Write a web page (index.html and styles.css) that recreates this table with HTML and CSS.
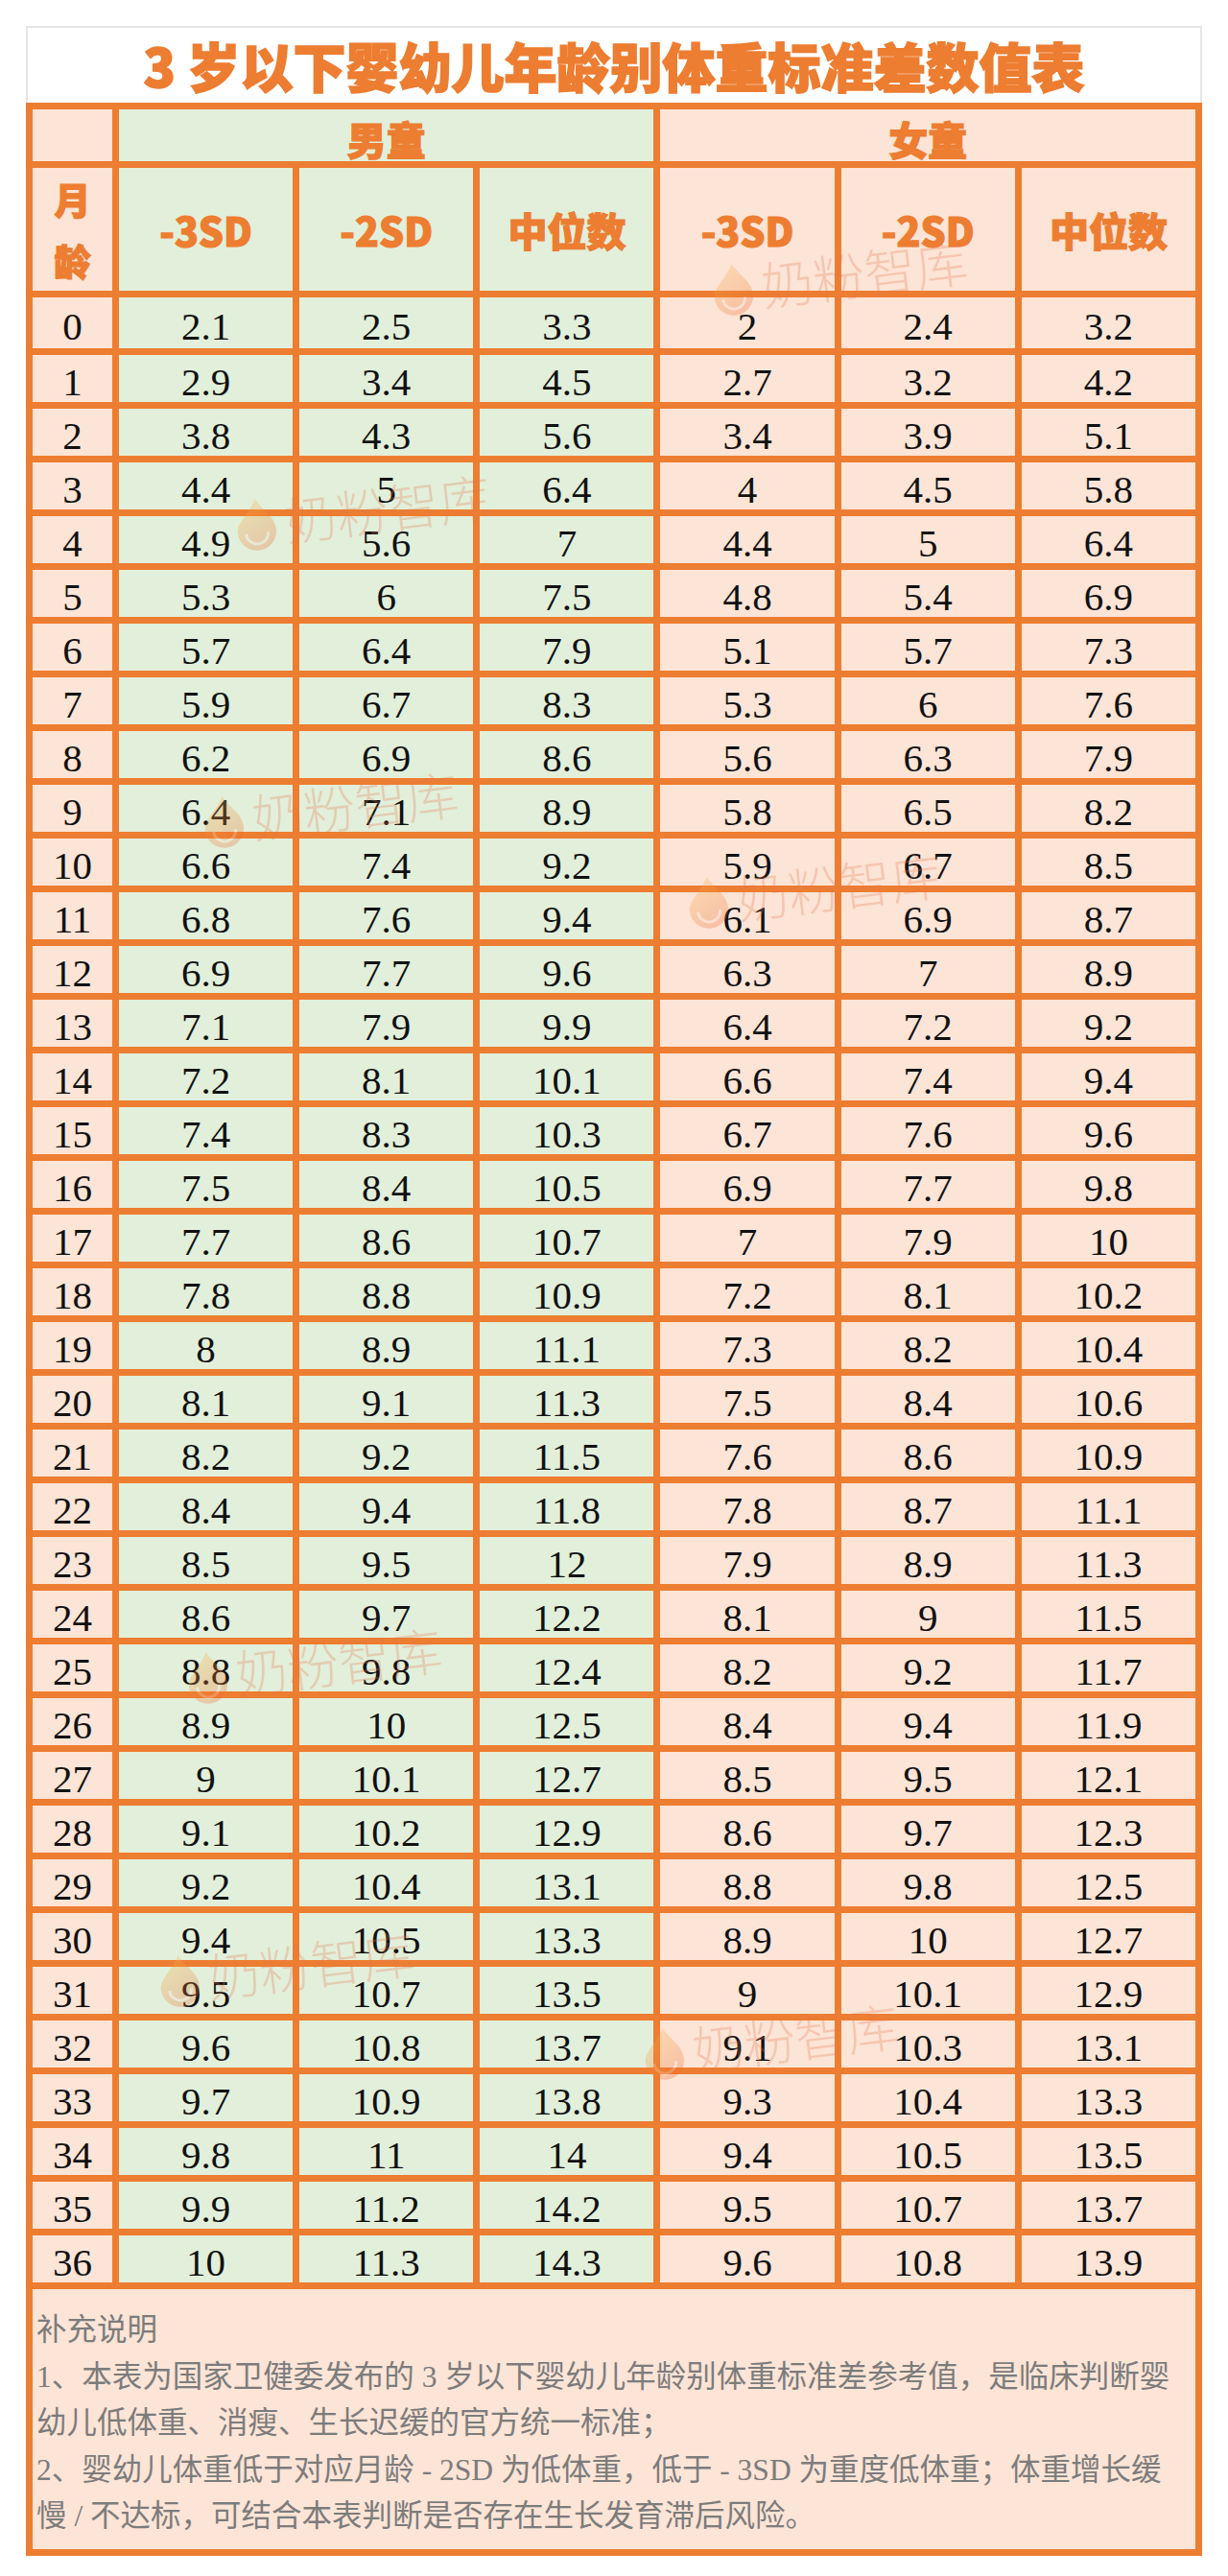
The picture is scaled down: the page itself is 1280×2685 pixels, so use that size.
FILE: index.html
```html
<!DOCTYPE html>
<html lang="zh-CN">
<head>
<meta charset="utf-8">
<title>3 岁以下婴幼儿年龄别体重标准差数值表</title>
<link rel="stylesheet" href="styles.css">
</head>
<body>
<svg class="defs" width="0" height="0" aria-hidden="true">
  <defs>
    <linearGradient id="wmgrad" x1="0" y1="0" x2="0.4" y2="1">
      <stop offset="0" stop-color="#FAC64E"/>
      <stop offset="1" stop-color="#EE6A2C"/>
    </linearGradient>
  </defs>
</svg>
<div class="page">
  <div class="title">3 岁以下婴幼儿年龄别体重标准差数值表</div>
  <table class="chart">
    <colgroup>
      <col class="c-mo">
      <col><col><col><col><col><col>
    </colgroup>
    <thead>
      <tr class="h1">
        <th class="m"></th>
        <th class="b" colspan="3">男童</th>
        <th class="g" colspan="3">女童</th>
      </tr>
      <tr class="h2">
        <th class="m mo">月<br>龄</th>
        <th class="b">-3SD</th>
        <th class="b">-2SD</th>
        <th class="b">中位数</th>
        <th class="g">-3SD</th>
        <th class="g">-2SD</th>
        <th class="g">中位数</th>
      </tr>
    </thead>
    <tbody>
      <tr class="first"><td class="m">0</td><td class="b">2.1</td><td class="b">2.5</td><td class="b">3.3</td><td class="g">2</td><td class="g">2.4</td><td class="g">3.2</td></tr>
      <tr><td class="m">1</td><td class="b">2.9</td><td class="b">3.4</td><td class="b">4.5</td><td class="g">2.7</td><td class="g">3.2</td><td class="g">4.2</td></tr>
      <tr><td class="m">2</td><td class="b">3.8</td><td class="b">4.3</td><td class="b">5.6</td><td class="g">3.4</td><td class="g">3.9</td><td class="g">5.1</td></tr>
      <tr><td class="m">3</td><td class="b">4.4</td><td class="b">5</td><td class="b">6.4</td><td class="g">4</td><td class="g">4.5</td><td class="g">5.8</td></tr>
      <tr><td class="m">4</td><td class="b">4.9</td><td class="b">5.6</td><td class="b">7</td><td class="g">4.4</td><td class="g">5</td><td class="g">6.4</td></tr>
      <tr><td class="m">5</td><td class="b">5.3</td><td class="b">6</td><td class="b">7.5</td><td class="g">4.8</td><td class="g">5.4</td><td class="g">6.9</td></tr>
      <tr><td class="m">6</td><td class="b">5.7</td><td class="b">6.4</td><td class="b">7.9</td><td class="g">5.1</td><td class="g">5.7</td><td class="g">7.3</td></tr>
      <tr><td class="m">7</td><td class="b">5.9</td><td class="b">6.7</td><td class="b">8.3</td><td class="g">5.3</td><td class="g">6</td><td class="g">7.6</td></tr>
      <tr><td class="m">8</td><td class="b">6.2</td><td class="b">6.9</td><td class="b">8.6</td><td class="g">5.6</td><td class="g">6.3</td><td class="g">7.9</td></tr>
      <tr><td class="m">9</td><td class="b">6.4</td><td class="b">7.1</td><td class="b">8.9</td><td class="g">5.8</td><td class="g">6.5</td><td class="g">8.2</td></tr>
      <tr><td class="m">10</td><td class="b">6.6</td><td class="b">7.4</td><td class="b">9.2</td><td class="g">5.9</td><td class="g">6.7</td><td class="g">8.5</td></tr>
      <tr><td class="m">11</td><td class="b">6.8</td><td class="b">7.6</td><td class="b">9.4</td><td class="g">6.1</td><td class="g">6.9</td><td class="g">8.7</td></tr>
      <tr><td class="m">12</td><td class="b">6.9</td><td class="b">7.7</td><td class="b">9.6</td><td class="g">6.3</td><td class="g">7</td><td class="g">8.9</td></tr>
      <tr><td class="m">13</td><td class="b">7.1</td><td class="b">7.9</td><td class="b">9.9</td><td class="g">6.4</td><td class="g">7.2</td><td class="g">9.2</td></tr>
      <tr><td class="m">14</td><td class="b">7.2</td><td class="b">8.1</td><td class="b">10.1</td><td class="g">6.6</td><td class="g">7.4</td><td class="g">9.4</td></tr>
      <tr><td class="m">15</td><td class="b">7.4</td><td class="b">8.3</td><td class="b">10.3</td><td class="g">6.7</td><td class="g">7.6</td><td class="g">9.6</td></tr>
      <tr><td class="m">16</td><td class="b">7.5</td><td class="b">8.4</td><td class="b">10.5</td><td class="g">6.9</td><td class="g">7.7</td><td class="g">9.8</td></tr>
      <tr><td class="m">17</td><td class="b">7.7</td><td class="b">8.6</td><td class="b">10.7</td><td class="g">7</td><td class="g">7.9</td><td class="g">10</td></tr>
      <tr><td class="m">18</td><td class="b">7.8</td><td class="b">8.8</td><td class="b">10.9</td><td class="g">7.2</td><td class="g">8.1</td><td class="g">10.2</td></tr>
      <tr><td class="m">19</td><td class="b">8</td><td class="b">8.9</td><td class="b">11.1</td><td class="g">7.3</td><td class="g">8.2</td><td class="g">10.4</td></tr>
      <tr><td class="m">20</td><td class="b">8.1</td><td class="b">9.1</td><td class="b">11.3</td><td class="g">7.5</td><td class="g">8.4</td><td class="g">10.6</td></tr>
      <tr><td class="m">21</td><td class="b">8.2</td><td class="b">9.2</td><td class="b">11.5</td><td class="g">7.6</td><td class="g">8.6</td><td class="g">10.9</td></tr>
      <tr><td class="m">22</td><td class="b">8.4</td><td class="b">9.4</td><td class="b">11.8</td><td class="g">7.8</td><td class="g">8.7</td><td class="g">11.1</td></tr>
      <tr><td class="m">23</td><td class="b">8.5</td><td class="b">9.5</td><td class="b">12</td><td class="g">7.9</td><td class="g">8.9</td><td class="g">11.3</td></tr>
      <tr><td class="m">24</td><td class="b">8.6</td><td class="b">9.7</td><td class="b">12.2</td><td class="g">8.1</td><td class="g">9</td><td class="g">11.5</td></tr>
      <tr><td class="m">25</td><td class="b">8.8</td><td class="b">9.8</td><td class="b">12.4</td><td class="g">8.2</td><td class="g">9.2</td><td class="g">11.7</td></tr>
      <tr><td class="m">26</td><td class="b">8.9</td><td class="b">10</td><td class="b">12.5</td><td class="g">8.4</td><td class="g">9.4</td><td class="g">11.9</td></tr>
      <tr><td class="m">27</td><td class="b">9</td><td class="b">10.1</td><td class="b">12.7</td><td class="g">8.5</td><td class="g">9.5</td><td class="g">12.1</td></tr>
      <tr><td class="m">28</td><td class="b">9.1</td><td class="b">10.2</td><td class="b">12.9</td><td class="g">8.6</td><td class="g">9.7</td><td class="g">12.3</td></tr>
      <tr><td class="m">29</td><td class="b">9.2</td><td class="b">10.4</td><td class="b">13.1</td><td class="g">8.8</td><td class="g">9.8</td><td class="g">12.5</td></tr>
      <tr><td class="m">30</td><td class="b">9.4</td><td class="b">10.5</td><td class="b">13.3</td><td class="g">8.9</td><td class="g">10</td><td class="g">12.7</td></tr>
      <tr><td class="m">31</td><td class="b">9.5</td><td class="b">10.7</td><td class="b">13.5</td><td class="g">9</td><td class="g">10.1</td><td class="g">12.9</td></tr>
      <tr><td class="m">32</td><td class="b">9.6</td><td class="b">10.8</td><td class="b">13.7</td><td class="g">9.1</td><td class="g">10.3</td><td class="g">13.1</td></tr>
      <tr><td class="m">33</td><td class="b">9.7</td><td class="b">10.9</td><td class="b">13.8</td><td class="g">9.3</td><td class="g">10.4</td><td class="g">13.3</td></tr>
      <tr><td class="m">34</td><td class="b">9.8</td><td class="b">11</td><td class="b">14</td><td class="g">9.4</td><td class="g">10.5</td><td class="g">13.5</td></tr>
      <tr><td class="m">35</td><td class="b">9.9</td><td class="b">11.2</td><td class="b">14.2</td><td class="g">9.5</td><td class="g">10.7</td><td class="g">13.7</td></tr>
      <tr><td class="m">36</td><td class="b">10</td><td class="b">11.3</td><td class="b">14.3</td><td class="g">9.6</td><td class="g">10.8</td><td class="g">13.9</td></tr>
    </tbody>
  </table>
  <div class="notes">
    <p class="notes-head">补充说明</p>
    <p>1、本表为国家卫健委发布的 3 岁以下婴幼儿年龄别体重标准差参考值，是临床判断婴幼儿低体重、消瘦、生长迟缓的官方统一标准；</p>
    <p>2、婴幼儿体重低于对应月龄 - 2SD 为低体重，低于 - 3SD 为重度低体重；体重增长缓慢 / 不达标，可结合本表判断是否存在生长发育滞后风险。</p>
  </div>

  <div class="wm wm1"><svg class="wm-logo" viewBox="0 0 50 60"><path d="M27 4C33 17 46 25 46 39A21 21 0 0 1 4 39C4 27 17 22 27 4Z" fill="url(#wmgrad)"/><path d="M13 41a12 12 0 0 0 24 0" fill="none" stroke="#fff" stroke-width="3" opacity=".7"/></svg><span>奶粉智库</span></div>
  <div class="wm wm2"><svg class="wm-logo" viewBox="0 0 50 60"><path d="M27 4C33 17 46 25 46 39A21 21 0 0 1 4 39C4 27 17 22 27 4Z" fill="url(#wmgrad)"/><path d="M13 41a12 12 0 0 0 24 0" fill="none" stroke="#fff" stroke-width="3" opacity=".7"/></svg><span>奶粉智库</span></div>
  <div class="wm wm3"><svg class="wm-logo" viewBox="0 0 50 60"><path d="M27 4C33 17 46 25 46 39A21 21 0 0 1 4 39C4 27 17 22 27 4Z" fill="url(#wmgrad)"/><path d="M13 41a12 12 0 0 0 24 0" fill="none" stroke="#fff" stroke-width="3" opacity=".7"/></svg><span>奶粉智库</span></div>
  <div class="wm wm4"><svg class="wm-logo" viewBox="0 0 50 60"><path d="M27 4C33 17 46 25 46 39A21 21 0 0 1 4 39C4 27 17 22 27 4Z" fill="url(#wmgrad)"/><path d="M13 41a12 12 0 0 0 24 0" fill="none" stroke="#fff" stroke-width="3" opacity=".7"/></svg><span>奶粉智库</span></div>
  <div class="wm wm5"><svg class="wm-logo" viewBox="0 0 50 60"><path d="M27 4C33 17 46 25 46 39A21 21 0 0 1 4 39C4 27 17 22 27 4Z" fill="url(#wmgrad)"/><path d="M13 41a12 12 0 0 0 24 0" fill="none" stroke="#fff" stroke-width="3" opacity=".7"/></svg><span>奶粉智库</span></div>
  <div class="wm wm6"><svg class="wm-logo" viewBox="0 0 50 60"><path d="M27 4C33 17 46 25 46 39A21 21 0 0 1 4 39C4 27 17 22 27 4Z" fill="url(#wmgrad)"/><path d="M13 41a12 12 0 0 0 24 0" fill="none" stroke="#fff" stroke-width="3" opacity=".7"/></svg><span>奶粉智库</span></div>
  <div class="wm wm7"><svg class="wm-logo" viewBox="0 0 50 60"><path d="M27 4C33 17 46 25 46 39A21 21 0 0 1 4 39C4 27 17 22 27 4Z" fill="url(#wmgrad)"/><path d="M13 41a12 12 0 0 0 24 0" fill="none" stroke="#fff" stroke-width="3" opacity=".7"/></svg><span>奶粉智库</span></div>
</div>
</body>
</html>
```

FILE: styles.css
```css
* {
  box-sizing: border-box;
}

html, body {
  margin: 0;
  padding: 0;
  background: #ffffff;
}

.defs {
  position: absolute;
  width: 0;
  height: 0;
  overflow: hidden;
}

.page {
  position: relative;
  width: 1280px;
  padding: 27px 27px 27px 27px;
}

.title {
  height: 80px;
  border: 2px solid #e6e6e6;
  border-bottom: 0;
  text-align: center;
  font-family: "Noto Sans CJK SC Black", "Noto Sans CJK SC", "Noto Sans", sans-serif;
  font-weight: 900;
  font-size: 55px;
  line-height: 76px;
  color: #ED7D31;
  -webkit-text-stroke: 1.6px #ED7D31;
  white-space: nowrap;
}

.chart {
  width: 100%;
  table-layout: fixed;
  border-collapse: separate;
  border-spacing: 7px;
  background: #ED7D31;
}

.c-mo {
  width: 83px;
}

.chart th,
.chart td {
  padding: 0;
  text-align: center;
  vertical-align: middle;
}

.b {
  background: #E2EFDA;
}

.g,
.m {
  background: #FCE4D6;
}

.chart th {
  font-family: "Noto Sans CJK SC Black", "Noto Sans CJK SC", "Noto Sans", sans-serif;
  font-weight: 900;
  color: #ED7D31;
  -webkit-text-stroke: 1.2px #ED7D31;
  font-size: 41px;
  line-height: 1;
}

.h1 th {
  height: 54px;
  padding-top: 6px;
}

.h2 th {
  height: 123px;
}

.h2 th.mo {
  font-size: 38px;
  line-height: 64px;
}

.chart td {
  height: 49px;
  padding-top: 8px;
  font-family: "Liberation Serif", "Times New Roman", serif;
  font-size: 41px;
  line-height: 1;
  color: #111111;
}

.chart tr.first td {
  height: 53px;
}

.notes {
  background: #FCE4D6;
  border: 7px solid #ED7D31;
  border-top: 0;
  padding: 19px 16px 9px 4px;
  font-family: "Liberation Serif", "Noto Sans CJK SC", serif;
  font-size: 31.5px;
  line-height: 48.5px;
  color: #7c7c7c;
}

.notes p {
  margin: 0;
}

.wm {
  position: absolute;
  display: flex;
  align-items: center;
  gap: 6px;
  height: 64px;
  transform: rotate(-7deg);
  transform-origin: left center;
  pointer-events: none;
  opacity: 0.28;
}

.wm-logo {
  width: 48px;
  height: 58px;
  flex: none;
}

.wm span {
  font-family: "Noto Sans CJK SC", sans-serif;
  font-weight: 300;
  font-size: 54px;
  line-height: 64px;
  color: #E5764E;
  white-space: nowrap;
}

.wm1 { left: 740px; top: 271px; }
.wm2 { left: 243px; top: 516px; }
.wm3 { left: 209px; top: 826px; }
.wm4 { left: 714px; top: 910px; }
.wm5 { left: 192px; top: 1718px; }
.wm6 { left: 163px; top: 2034px; }
.wm7 { left: 668px; top: 2110px; }
```
